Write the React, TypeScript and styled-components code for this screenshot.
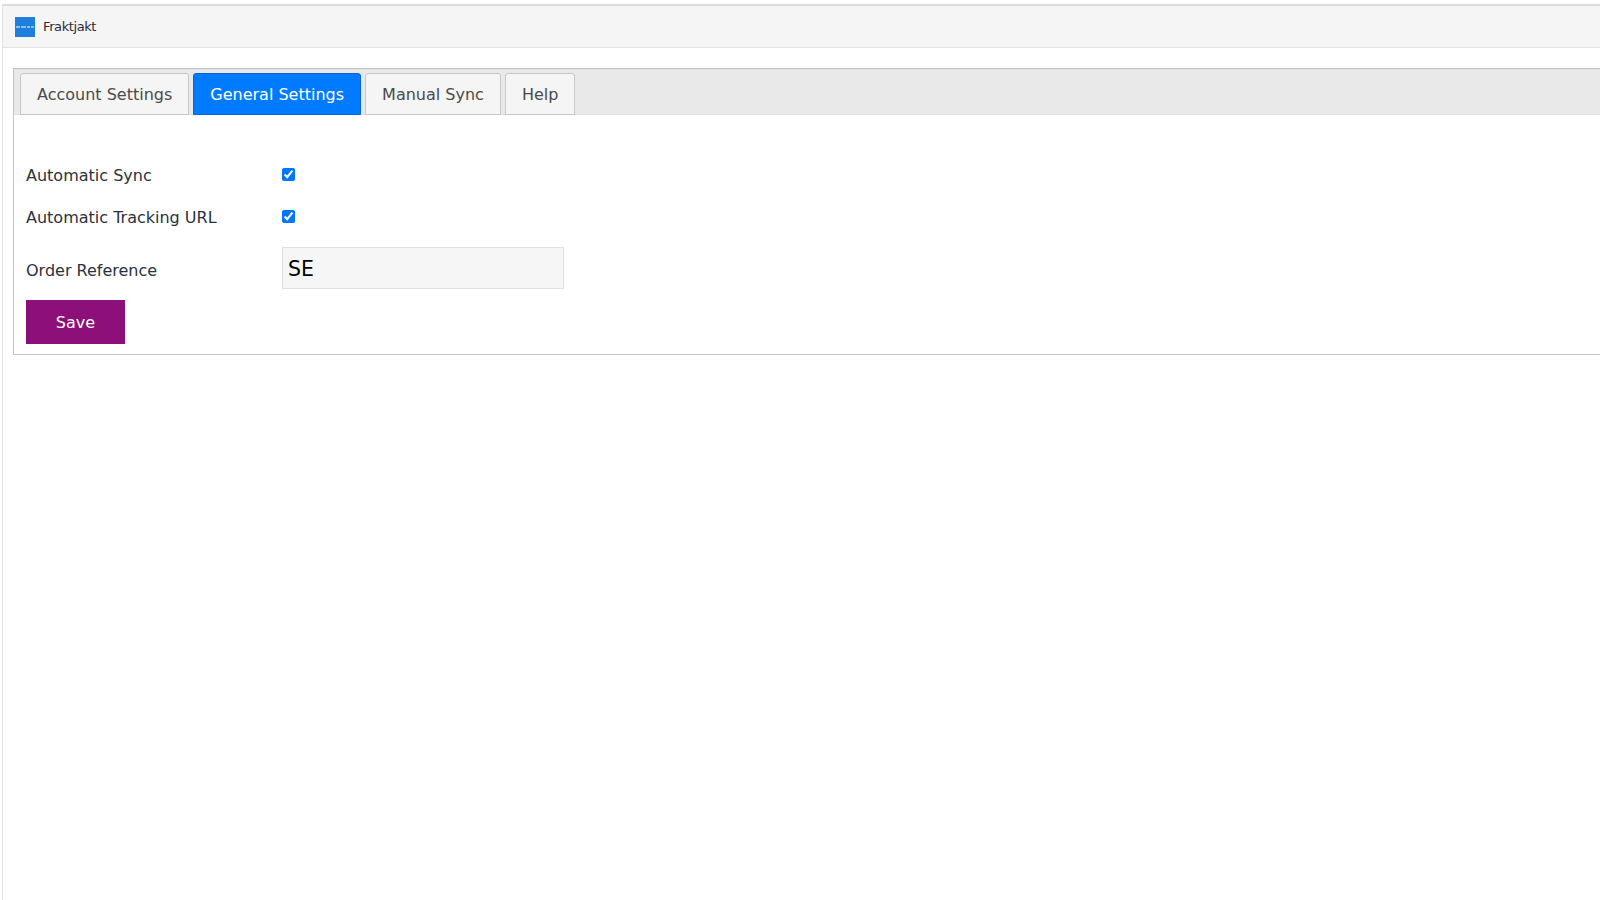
import React, { useState } from 'react';
import styled, { createGlobalStyle } from 'styled-components';

const GlobalStyle = createGlobalStyle`
  html, body {
    margin: 0;
    padding: 0;
    background: #fff;
    overflow: hidden;
  }
  body {
    font-family: "DejaVu Sans", Verdana, sans-serif;
  }
`;

const Page = styled.div`
  width: 1620px;
  height: 896px;
  margin: 4px 0 0 2px;
  border-top: 2px solid #dcdcdc;
  border-left: 1px solid #e4e4e4;
  box-sizing: border-box;
`;

const Header = styled.header`
  height: 42px;
  display: flex;
  align-items: center;
  gap: 8px;
  padding-left: 12px;
  background: #f5f5f5;
  border-bottom: 1px solid #e2e2e2;
  box-sizing: border-box;
`;

const Title = styled.span`
  font-size: 13px;
  letter-spacing: -0.4px;
  color: #2b2b3a;
`;

const Panel = styled.section`
  margin: 20px 0 0 10px;
  height: 287px;
  border: 1px solid #c4c4c4;
  box-sizing: border-box;
`;

const TabBar = styled.nav`
  height: 46px;
  display: flex;
  align-items: flex-end;
  gap: 4px;
  padding-left: 6px;
  background: #e9e9e9;
  border-top: 1px solid #e2e2e2;
  border-bottom: 1px solid #dedede;
  box-sizing: border-box;
`;

const Tab = styled.button<{ $active?: boolean }>`
  height: 42px;
  margin-bottom: -1px;
  padding: 0 16px;
  font-family: inherit;
  font-size: 16px;
  color: ${(p) => (p.$active ? '#fff' : '#4a4a4a')};
  background: ${(p) => (p.$active ? '#007bff' : '#f5f5f5')};
  border: 1px solid ${(p) => (p.$active ? '#0062e6' : '#c6c6c6')};
  border-radius: 3px 3px 0 0;
  cursor: pointer;
`;

const Form = styled.form`
  padding: 38px 0 0 12px;
`;

const Row = styled.div`
  height: 42px;
  display: flex;
  align-items: center;
`;

const Label = styled.label`
  width: 256px;
  padding-top: 2px;
  font-size: 16px;
  color: #2a3140;
`;

const InputRow = styled(Row)`
  height: 53px;
  margin-top: 4px;

  ${Label} {
    padding-top: 5px;
  }
`;

const Check = styled.input`
  width: 13px;
  height: 13px;
  margin: 0;
`;

const TextInput = styled.input`
  width: 282px;
  height: 42px;
  padding: 2px 5px 0;
  font-family: inherit;
  font-size: 20.5px;
  color: #000;
  background: #f6f6f6;
  border: 1px solid #e0e0e0;
  box-sizing: border-box;
  outline: none;
`;

const SaveButton = styled.button`
  display: block;
  width: 99px;
  height: 44px;
  margin-top: 6px;
  font-family: inherit;
  font-size: 16px;
  color: #fff;
  background: #8c0f7a;
  border: none;
  cursor: pointer;
`;

const tabs = ['Account Settings', 'General Settings', 'Manual Sync', 'Help'];

const Logo = () => (
  <svg width="20" height="20" viewBox="0 0 20 20" aria-hidden="true">
    <rect width="20" height="20" fill="#1f7fdc" />
    <path d="M1 10h18" stroke="#8fbdea" strokeWidth="2" strokeDasharray="4 1 5 1 3 1" />
  </svg>
);

const App = () => {
  const [activeTab, setActiveTab] = useState('General Settings');
  const [autoSync, setAutoSync] = useState(true);
  const [autoTracking, setAutoTracking] = useState(true);
  const [reference, setReference] = useState('SE');

  return (
    <>
      <GlobalStyle />
      <Page>
        <Header>
          <Logo />
          <Title>Fraktjakt</Title>
        </Header>
        <Panel>
          <TabBar>
            {tabs.map((tab) => (
              <Tab key={tab} type="button" $active={tab === activeTab} onClick={() => setActiveTab(tab)}>
                {tab}
              </Tab>
            ))}
          </TabBar>
          <Form onSubmit={(e) => e.preventDefault()}>
            <Row>
              <Label htmlFor="sync">Automatic Sync</Label>
              <Check id="sync" type="checkbox" checked={autoSync} onChange={(e) => setAutoSync(e.target.checked)} />
            </Row>
            <Row>
              <Label htmlFor="tracking">Automatic Tracking URL</Label>
              <Check id="tracking" type="checkbox" checked={autoTracking} onChange={(e) => setAutoTracking(e.target.checked)} />
            </Row>
            <InputRow>
              <Label htmlFor="reference">Order Reference</Label>
              <TextInput id="reference" value={reference} onChange={(e) => setReference(e.target.value)} />
            </InputRow>
            <SaveButton type="submit">Save</SaveButton>
          </Form>
        </Panel>
      </Page>
    </>
  );
};

export default App;
